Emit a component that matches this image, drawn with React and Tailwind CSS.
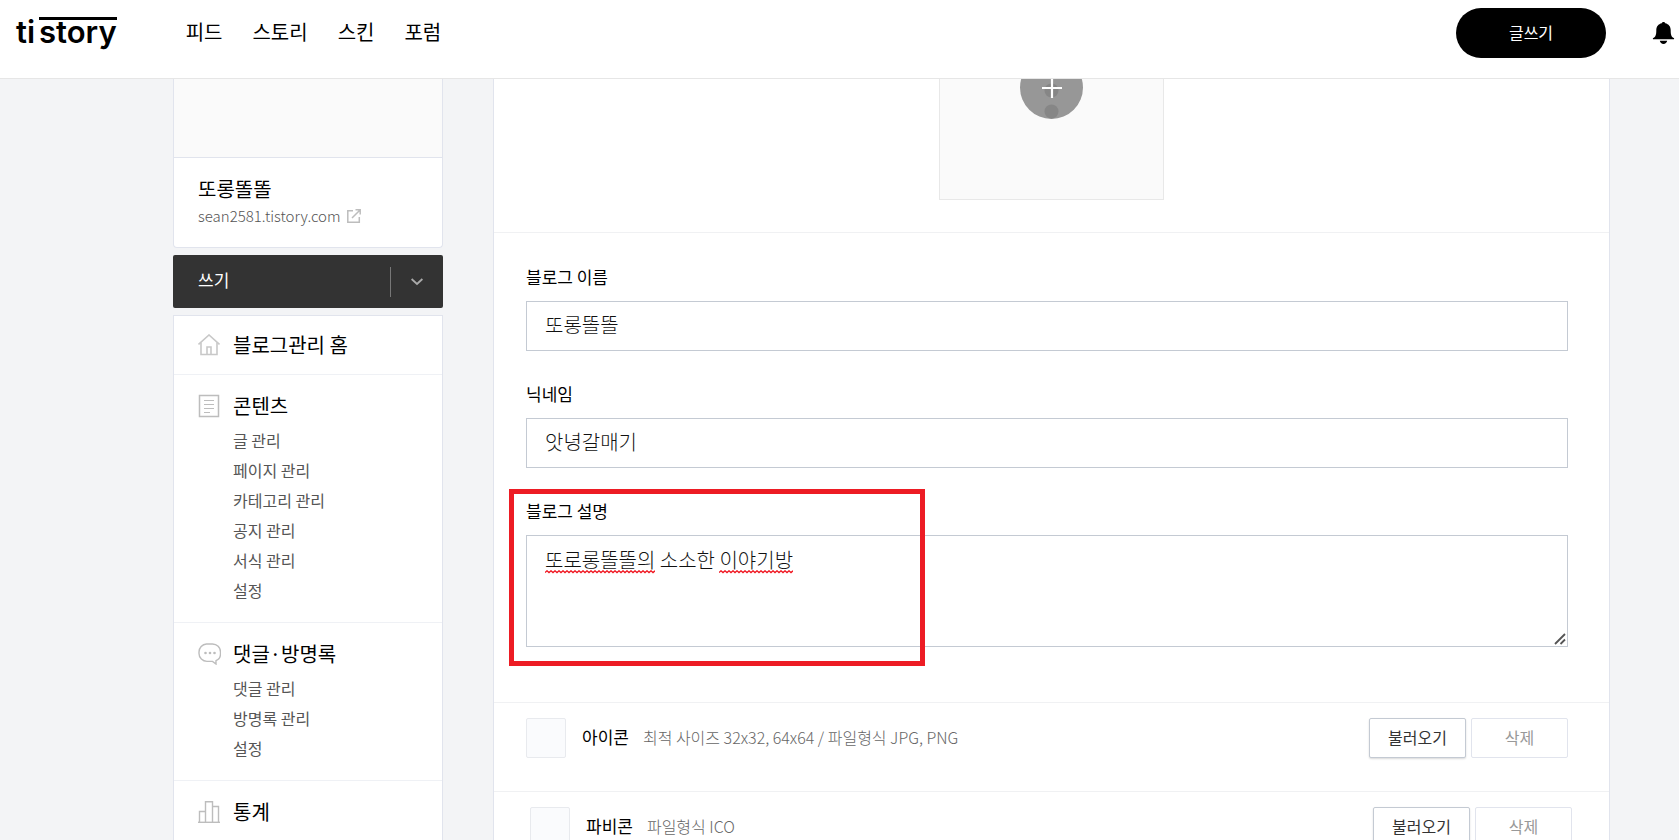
import React, { useState } from 'react';

const NAV_ITEMS = ['피드', '스토리', '스킨', '포럼'];

const MENU = [
  {
    title: '콘텐츠',
    icon: ContentIcon,
    items: ['글 관리', '페이지 관리', '카테고리 관리', '공지 관리', '서식 관리', '설정'],
  },
  {
    title: '댓글·방명록',
    icon: CommentIcon,
    items: ['댓글 관리', '방명록 관리', '설정'],
  },
  { title: '통계', icon: StatsIcon, items: [] },
];

function HomeIcon() {
  return (
    <svg width="22" height="22" viewBox="0 0 22 22" fill="none" stroke="#c8c8c8" strokeWidth="1.6" aria-hidden="true">
      <path d="M.5 10.5 11 1l10.500 9.500" />
      <path d="M3 8.500V20.500h16V8.500" />
      <path d="M9 20.500v-7.500h4v7.500" />
    </svg>
  );
}

function ContentIcon() {
  return (
    <svg width="22" height="24" viewBox="0 0 22 24" fill="none" stroke="#bdbdbd" aria-hidden="true">
      <path d="M1.500 1.500h19v21h-19z" strokeWidth="1.500" />
      <path d="M6 6.500h10M6 10.500h10M6 14.500h10M6 18.500h6" strokeWidth="1.200" />
    </svg>
  );
}

function CommentIcon() {
  return (
    <svg width="23" height="22" viewBox="0 0 23 22" fill="none" stroke="#bdbdbd" strokeWidth="1.400" aria-hidden="true">
      <path d="M8.500 1h6a8 8 0 0 1 8 8v1.500a7.500 7.500 0 0 1-4.500 7.200V21l-3.500-2.600H9A8 8 0 0 1 1 10.400V9a8 8 0 0 1 7.500-8z" />
      <g fill="#bdbdbd" stroke="none">
        <circle cx="7.500" cy="10" r="1.300" />
        <circle cx="12" cy="10" r="1.300" />
        <circle cx="16.500" cy="10" r="1.300" />
      </g>
    </svg>
  );
}

function StatsIcon() {
  return (
    <svg width="22" height="22" viewBox="0 0 22 22" fill="none" stroke="#bdbdbd" strokeWidth="1.400" aria-hidden="true">
      <path d="M0 21.300h22" />
      <path d="M1.500 21V10.500h6M7.500 21V.7h7V21M14.500 5.500h6V21" />
    </svg>
  );
}

function Header() {
  return (
    <header className="relative z-10 flex h-[79px] shrink-0 items-start border-b border-[#e6e6e6] bg-white pl-4">
      <a href="#" className="mt-[17px] flex font-['Inter',sans-serif] text-[31px] leading-6 font-semibold text-black">
        <span className="mt-[3px]">ti</span>
        <span className="ml-1 border-t-[3px] border-black">story</span>
      </a>
      <nav className="ml-[69px] flex gap-[30px] pt-[17px]">
        {NAV_ITEMS.map(item => (
          <a key={item} href="#" className="text-xl leading-[30px] text-black">{item}</a>
        ))}
      </nav>
      <button type="button" className="mt-2 ml-auto h-[50px] w-[150px] rounded-full bg-black pb-[3px] text-base text-white">
        글쓰기
      </button>
      <button type="button" aria-label="알림" className="mt-[21px] mr-1 ml-[46px]">
        <svg width="23" height="24" viewBox="0 0 23 24" aria-hidden="true">
          <path d="M11.500 1c-1 0-1.600.6-1.700 1.300C6.300 3 4.300 5.700 4.300 9.200c0 4.500-.6 6.500-3 7.800-.7.400-.5 1.300.2 1.300h20c.7 0 .9-.9.200-1.300-2.400-1.300-3-3.300-3-7.800 0-3.500-2-6.200-5.500-6.900C13.100 1.600 12.500 1 11.500 1z" />
          <path d="M7.800 19.800h7.400c-.3 2-1.800 3.200-3.700 3.200s-3.400-1.200-3.700-3.200z" />
        </svg>
      </button>
    </header>
  );
}

function Sidebar() {
  return (
    <aside className="flex w-[270px] shrink-0 flex-col">
      <div className="shrink-0 rounded-b-sm border border-t-0 border-[#e1e4ed] bg-white">
        <div className="h-[79px] border-b border-[#e1e4ed] bg-[#fafafa]" />
        <div className="h-[89px] px-6 pt-[17px]">
          <strong className="block text-xl leading-[28px] font-normal text-black">또롱똘똘</strong>
          <a href="#" className="flex items-center gap-1.5 text-[15px] leading-[26px] font-light text-[#555]">
            sean2581.tistory.com
            <svg width="14" height="14" viewBox="0 0 14 14" fill="none" stroke="#bdbdbd" strokeWidth="1.500" aria-hidden="true">
              <path d="M6 1.700H.8v11.500h11.500V8" />
              <path d="M5 9l7.800-7.800M8.500.8h4.700v4.700" />
            </svg>
          </a>
        </div>
      </div>

      <div className="mt-[7px] flex h-[53px] shrink-0 items-center rounded-xs bg-[#333]">
        <button type="button" className="h-full flex-1 pb-[3px] pl-[25px] text-left text-[17px] text-white">쓰기</button>
        <button type="button" aria-label="글쓰기 메뉴 열기" className="flex h-[30px] w-[53px] items-center justify-center border-l border-[#777]">
          <svg width="12" height="8" viewBox="0 0 12 8" fill="none" stroke="#aaa" strokeWidth="1.800" aria-hidden="true">
            <path d="M.6 1 6 6l5.400-5" />
          </svg>
        </button>
      </div>

      <nav className="mt-[7px] shrink-0 border border-[#e1e4ed] bg-white">
        <a href="#" className="flex items-center gap-[13px] px-6 py-3.5 text-xl leading-[30px] text-black">
          <HomeIcon />
          블로그관리 홈
        </a>
        {MENU.map(({ title, icon: Icon, items }) => (
          <section key={title} className="border-t border-[#eff1f5] px-6 pt-4 pb-[17px]">
            <h2 className="flex items-center gap-[13px] text-xl leading-[30px] text-black">
              <span className="w-[22px]"><Icon /></span>
              {title}
            </h2>
            {items.length > 0 && (
              <ul className="mt-1 pl-[35px]">
                {items.map(item => (
                  <li key={item}>
                    <a href="#" className="block text-base leading-[30px] text-[#555]">{item}</a>
                  </li>
                ))}
              </ul>
            )}
          </section>
        ))}
      </nav>
    </aside>
  );
}

function TextField({ id, label, value, onChange }) {
  return (
    <div>
      <label htmlFor={id} className="mb-3 block text-[17px] leading-6 text-black">{label}</label>
      <input
        id={id}
        type="text"
        value={value}
        onChange={e => onChange(e.target.value)}
        className="block h-[50px] w-full border border-[#c4cad3] bg-white px-[18px] pb-[3px] text-xl font-light text-[#111] outline-none"
      />
    </div>
  );
}

// Wavy spell-check mark drawn under a misspelled word
function Squiggle({ width }) {
  const points = [];
  for (let x = 0; x <= width; x += 2) {
    points.push(`${x},${(x / 2) % 2 ? 0.8 : 2.6}`);
  }
  return (
    <svg width={width} height="4" fill="none" stroke="#f0141e" strokeWidth="1.300" aria-hidden="true">
      <polyline points={points.join(' ')} />
    </svg>
  );
}

function FileRow({ title, hint, className }) {
  return (
    <div className={`flex items-center border-t border-[#f0f1f3] pt-[15px] pb-[33px] ${className}`}>
      <span className="size-10 rounded-xs border border-[#e8eaee] bg-[#fafbfd]" />
      <strong className="ml-4 pb-0.5 text-[17px] leading-6 font-normal text-black">{title}</strong>
      <span className="ml-3.5 pb-0.5 text-base leading-6 font-light text-[#666]">{hint}</span>
      <div className="ml-auto flex gap-[5px]">
        <button type="button" className="h-10 w-[97px] rounded-xs border border-[#c4cad3] bg-white pb-0.5 text-base text-[#333] shadow-[0_1px_2px_rgba(0,0,0,0.15)]">
          불러오기
        </button>
        <button type="button" className="h-10 w-[97px] rounded-xs border border-[#e1e4ed] bg-white pb-0.5 text-base text-[#999]">
          삭제
        </button>
      </div>
    </div>
  );
}

function BlogSettings() {
  const [name, setName] = useState('또롱똘똘');
  const [nickname, setNickname] = useState('앗녕갈매기');
  const [description, setDescription] = useState('또로롱똘똘의 소소한 이야기방');

  return (
    <main className="min-w-0 flex-1 border-x border-[#e1e4ed] bg-white">
      <div className="flex h-[153px] items-end justify-center overflow-hidden pb-8">
        <div className="flex size-[225px] shrink-0 items-center justify-center border border-[#e8e8e8] bg-[#fafafa]">
          <button type="button" aria-label="이미지 추가">
            <svg width="63" height="63" viewBox="0 0 63 63" aria-hidden="true">
              <circle cx="31.500" cy="31.500" r="31.500" fill="#979797" />
              <circle cx="31.500" cy="34.500" r="7" fill="#868686" />
              <circle cx="31.500" cy="55.500" r="7" fill="#868686" />
              <path d="M22 32h20M32 22v20" stroke="#fff" strokeWidth="2.200" />
            </svg>
          </button>
        </div>
      </div>

      <div className="flex flex-col gap-[31px] border-t border-[#f0f1f3] pt-8 pr-[41px] pb-[55px] pl-8">
        <TextField id="blog-name" label="블로그 이름" value={name} onChange={setName} />
        <TextField id="nickname" label="닉네임" value={nickname} onChange={setNickname} />
        <div className="relative">
          <label htmlFor="description" className="mb-3 block text-[17px] leading-6 text-black">블로그 설명</label>
          <textarea
            id="description"
            value={description}
            onChange={e => setDescription(e.target.value)}
            spellCheck={false}
            className="block h-28 w-full resize border border-[#c4cad3] bg-white px-[18px] py-[9px] text-xl leading-[30px] font-light text-[#111] outline-none"
          />
          <div className="pointer-events-none absolute top-[71px] left-[19px] flex gap-16">
            <Squiggle width={110} />
            <Squiggle width={74} />
          </div>
          <svg
            width="14"
            height="14"
            viewBox="0 0 14 14"
            stroke="#555"
            strokeWidth="1.800"
            className="pointer-events-none absolute right-px bottom-px bg-white"
            aria-hidden="true"
          >
            <path d="M2 12 12 2M7.500 12 12 7.500" />
          </svg>
          <div className="pointer-events-none absolute -top-[10px] -left-[17px] h-[177px] w-[416px] border-[5px] border-[#ed1c24]" />
        </div>
      </div>

      <FileRow title="아이콘" hint="최적 사이즈 32x32, 64x64 / 파일형식 JPG, PNG" className="pr-[41px] pl-8" />
      <FileRow title="파비콘" hint="파일형식 ICO" className="pr-[37px] pl-9" />
    </main>
  );
}

function App() {
  return (
    <div className="flex h-screen flex-col overflow-hidden bg-[#f3f4f6] font-['Noto_Sans_CJK_KR',sans-serif]">
      <Header />
      <div className="flex min-h-0 flex-1 gap-[50px] pr-[69px] pl-[173px]">
        <Sidebar />
        <BlogSettings />
      </div>
    </div>
  );
}

export default App;
